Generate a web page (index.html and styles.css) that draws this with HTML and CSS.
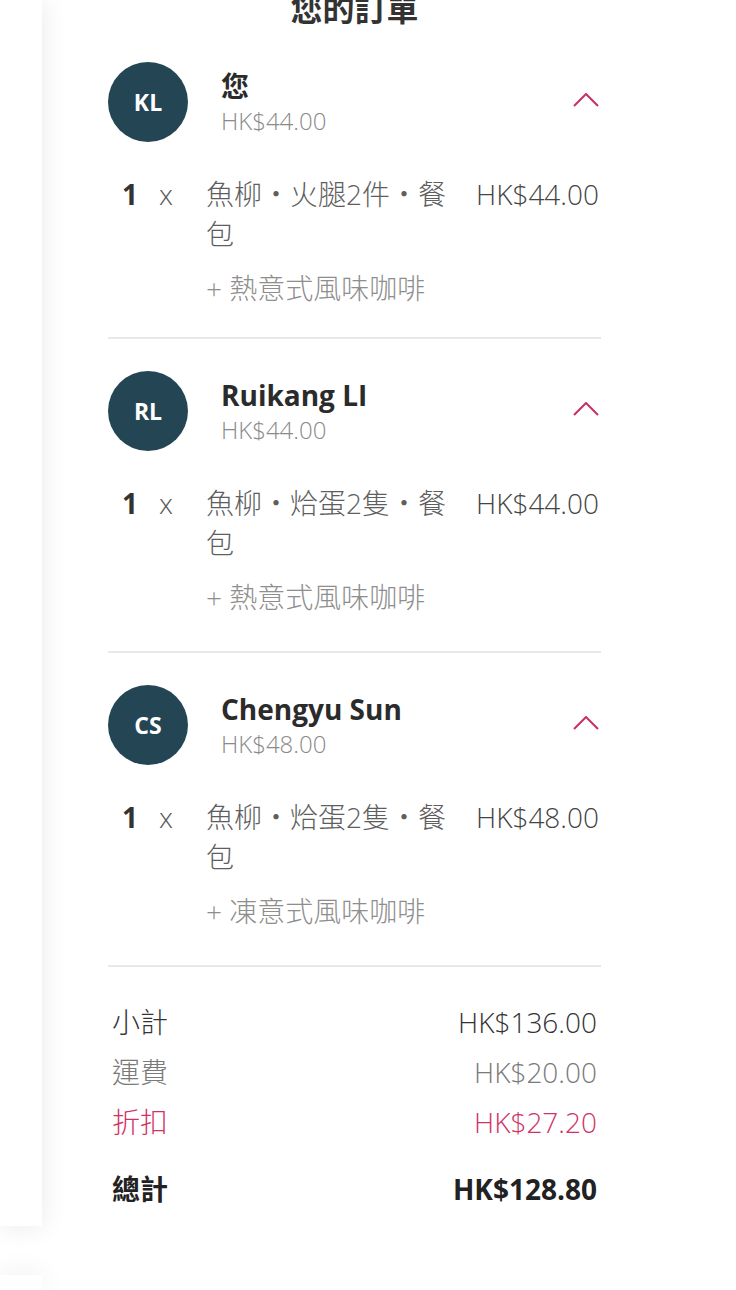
FILE: index.html
```html
<!DOCTYPE html>
<html lang="zh-Hant">
<head>
<meta charset="utf-8">
<title>您的訂單</title>
<link rel="stylesheet" href="styles.css">
</head>
<body>
<div class="page">
  <aside class="side">
    <div class="side-card side-card--top"></div>
    <div class="side-card side-card--bottom"></div>
  </aside>
  <main class="order">
    <h1 class="order-title">您的訂單</h1>

    <section class="person person--first">
      <div class="person-head">
        <div class="avatar">KL</div>
        <div class="person-info">
          <div class="person-name">您</div>
          <div class="person-total">HK$44.00</div>
        </div>
        <svg class="chevron" width="26" height="14" viewBox="0 0 26 14"><path d="M1 13 L13 1 L25 13" fill="none" stroke="#c92f60" stroke-width="2"/></svg>
      </div>
      <div class="item">
        <span class="item-qty">1</span>
        <span class="item-x">x</span>
        <div class="item-body">
          <div class="item-name">魚柳・火腿2件・餐包</div>
          <div class="item-addon">+ 熱意式風味咖啡</div>
        </div>
        <span class="item-price">HK$44.00</span>
      </div>
    </section>

    <section class="person">
      <div class="person-head">
        <div class="avatar">RL</div>
        <div class="person-info">
          <div class="person-name">Ruikang LI</div>
          <div class="person-total">HK$44.00</div>
        </div>
        <svg class="chevron" width="26" height="14" viewBox="0 0 26 14"><path d="M1 13 L13 1 L25 13" fill="none" stroke="#c92f60" stroke-width="2"/></svg>
      </div>
      <div class="item">
        <span class="item-qty">1</span>
        <span class="item-x">x</span>
        <div class="item-body">
          <div class="item-name">魚柳・烚蛋2隻・餐包</div>
          <div class="item-addon">+ 熱意式風味咖啡</div>
        </div>
        <span class="item-price">HK$44.00</span>
      </div>
    </section>

    <section class="person">
      <div class="person-head">
        <div class="avatar">CS</div>
        <div class="person-info">
          <div class="person-name">Chengyu Sun</div>
          <div class="person-total">HK$48.00</div>
        </div>
        <svg class="chevron" width="26" height="14" viewBox="0 0 26 14"><path d="M1 13 L13 1 L25 13" fill="none" stroke="#c92f60" stroke-width="2"/></svg>
      </div>
      <div class="item">
        <span class="item-qty">1</span>
        <span class="item-x">x</span>
        <div class="item-body">
          <div class="item-name">魚柳・烚蛋2隻・餐包</div>
          <div class="item-addon">+ 凍意式風味咖啡</div>
        </div>
        <span class="item-price">HK$48.00</span>
      </div>
    </section>

    <div class="summary">
      <div class="sum-row"><span>小計</span><span>HK$136.00</span></div>
      <div class="sum-row sum-row--muted"><span>運費</span><span>HK$20.00</span></div>
      <div class="sum-row sum-row--discount"><span>折扣</span><span>HK$27.20</span></div>
      <div class="sum-row sum-row--total"><span>總計</span><span>HK$128.80</span></div>
    </div>
  </main>
</div>
</body>
</html>
```

FILE: styles.css
```css
* { box-sizing: border-box; }

html, body {
  margin: 0;
  padding: 0;
  background: #ffffff;
}

body {
  width: 736px;
  height: 1290px;
  overflow: hidden;
  font-family: "Open Sans", "Noto Sans CJK TC", sans-serif;
  color: #333333;
}

.page {
  display: grid;
  grid-template-columns: 42px 493px;
  column-gap: 66px;
  height: 1290px;
  overflow: hidden;
}

.side {
  display: flex;
  flex-direction: column;
  gap: 49px;
}

.side-card {
  background: #ffffff;
  box-shadow: 0 0 28px rgba(0, 0, 0, 0.09);
}

.side-card--top {
  height: 1226px;
}

.side-card--bottom {
  height: 15px;
}

.order {
  display: flex;
  flex-direction: column;
}

.order-title {
  margin: -11px 0 0;
  font-size: 32px;
  line-height: 40px;
  font-weight: 700;
  text-align: center;
  color: #333333;
}

.person {
  padding: 32px 0 34px;
  border-bottom: 2px solid #e8e8e8;
}

.person--first {
  padding-top: 33px;
  padding-bottom: 29px;
}

.person-head {
  display: flex;
  align-items: center;
}

.avatar {
  width: 80px;
  height: 80px;
  border-radius: 50%;
  background: #244654;
  color: #ffffff;
  font-weight: 700;
  font-size: 23px;
  display: flex;
  align-items: center;
  justify-content: center;
  flex: none;
}

.person-info {
  margin-left: 33px;
  flex: 1;
  display: flex;
  flex-direction: column;
}

.person-name {
  font-size: 28px;
  line-height: 38px;
  font-weight: 700;
  color: #2b2b2b;
}

.person-total {
  font-size: 24px;
  line-height: 32px;
  font-weight: 300;
  color: #8a8a8a;
}

.chevron {
  margin-right: 2px;
  margin-top: -4px;
  flex: none;
}

.item {
  margin-top: 32px;
  display: grid;
  grid-template-columns: 37px 47px 1fr auto;
  padding-left: 14px;
  padding-right: 2px;
  font-size: 28px;
  line-height: 40px;
}

.item-qty {
  font-weight: 700;
  color: #333333;
}

.item-x {
  font-weight: 300;
  color: #5a5a5a;
}

.item-body {
  padding-right: 24px;
}

.item-name {
  font-weight: 300;
  color: #5e5e5e;
}

.item-addon {
  margin-top: 14px;
  font-weight: 300;
  color: #8e8e8e;
}

.item-price {
  font-weight: 300;
  color: #444444;
}

.summary {
  margin: 30px 4px 0 2px;
  display: flex;
  flex-direction: column;
}

.sum-row {
  display: flex;
  justify-content: space-between;
  padding-left: 2px;
  font-size: 28px;
  line-height: 50px;
  font-weight: 300;
  color: #333333;
}

.sum-row--muted {
  color: #7a7a7a;
}

.sum-row--discount {
  color: #cf3366;
}

.sum-row--total {
  margin-top: 17px;
  font-weight: 700;
  color: #222222;
}
```
